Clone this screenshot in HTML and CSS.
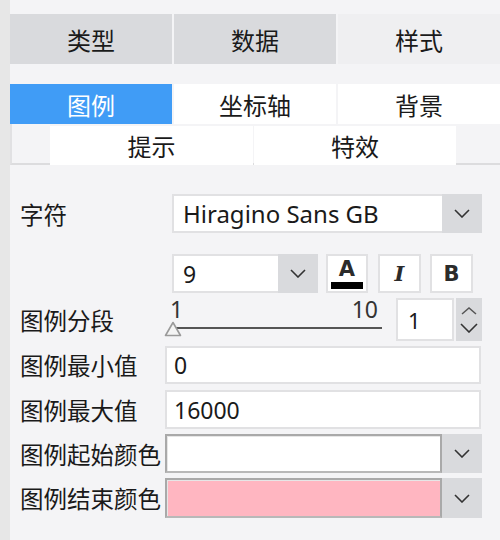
FILE: index.html
```html
<!DOCTYPE html>
<html lang="zh">
<head>
<meta charset="utf-8">
<link rel="stylesheet" href="styles.css">
</head>
<body>
<div class="app">
  <div class="strip"></div>
  <div class="panel">
    <div class="tabs main">
      <div class="tab gray">类型</div>
      <div class="tab gray">数据</div>
      <div class="tab light">样式</div>
    </div>
    <div class="tabs sub">
      <div class="tab blue">图例</div>
      <div class="tab white">坐标轴</div>
      <div class="tab white">背景</div>
    </div>
    <div class="subtabs">
      <div class="stab s1">提示</div>
      <div class="stab s2">特效</div>
    </div>
    <div class="form">
      <div class="row r-font">
        <div class="label">字符</div>
        <div class="combo font-combo">
          <div class="combo-text">Hiragino Sans GB</div>
          <div class="drop"><svg width="16" height="9" viewBox="0 0 16 9"><path d="M1 1 L8 8 L15 1" fill="none" stroke="#333" stroke-width="1.6"/></svg></div>
        </div>
      </div>
      <div class="row r-style">
        <div class="combo size-combo">
          <div class="combo-text num">9</div>
          <div class="drop"><svg width="16" height="9" viewBox="0 0 16 9"><path d="M1 1 L8 8 L15 1" fill="none" stroke="#333" stroke-width="1.6"/></svg></div>
        </div>
        <div class="sbtn btn-a"><span class="a-glyph">A</span><span class="a-bar"></span></div>
        <div class="sbtn btn-i">I</div>
        <div class="sbtn btn-b">B</div>
      </div>
      <div class="row r-slider">
        <div class="label">图例分段</div>
        <div class="slider">
          <div class="slider-labels"><span>1</span><span>10</span></div>
          <div class="track"></div>
          <svg class="thumb" width="18" height="16" viewBox="0 0 18 16"><path d="M9 1.5 L16.5 14.5 L1.5 14.5 Z" fill="#f4f4f4" stroke="#9a9a9a" stroke-width="1.6" stroke-linejoin="round"/></svg>
        </div>
        <div class="spin">
          <div class="spin-input num">1</div>
          <div class="spin-btns">
            <svg width="18" height="9" viewBox="0 0 18 9"><path d="M2 8 L9 2 L16 8" fill="none" stroke="#555" stroke-width="1.5"/></svg>
            <svg width="18" height="10" viewBox="0 0 18 10"><path d="M1 1 L9 9 L17 1" fill="none" stroke="#333" stroke-width="1.6"/></svg>
          </div>
        </div>
      </div>
      <div class="row r-min">
        <div class="label">图例最小值</div>
        <div class="input num">0</div>
      </div>
      <div class="row r-max">
        <div class="label">图例最大值</div>
        <div class="input num">16000</div>
      </div>
      <div class="row r-start">
        <div class="label">图例起始颜色</div>
        <div class="color-combo">
          <div class="swatch white-sw"></div>
          <div class="drop"><svg width="16" height="9" viewBox="0 0 16 9"><path d="M1 1 L8 8 L15 1" fill="none" stroke="#333" stroke-width="1.6"/></svg></div>
        </div>
      </div>
      <div class="row r-end">
        <div class="label">图例结束颜色</div>
        <div class="color-combo">
          <div class="swatch pink-sw"></div>
          <div class="drop"><svg width="16" height="9" viewBox="0 0 16 9"><path d="M1 1 L8 8 L15 1" fill="none" stroke="#333" stroke-width="1.6"/></svg></div>
        </div>
      </div>
    </div>
  </div>
</div>
</body>
</html>
```

FILE: styles.css
```css
* { box-sizing: border-box; }
html, body { margin: 0; padding: 0; }
body {
  font-family: "Noto Sans", "Noto Sans CJK SC", sans-serif;
  color: #1a1a1a;
  background: #f4f4f6;
}
.app { display: flex; width: 500px; height: 540px; overflow: hidden; }
.strip { width: 10px; flex: none; background: #e7e7e7; }
.panel { flex: 1; background: #f4f4f6; padding-top: 14px; }

.tabs { display: grid; grid-template-columns: 162px 162px 162px; column-gap: 2px; }
.tab {
  display: flex; align-items: center; justify-content: center;
  font-family: "Noto Sans CJK SC", sans-serif;
  font-size: 24px;
}
.main .tab { height: 50px; }
.sub { margin-top: 20px; }
.sub .tab { height: 40px; }
.gray { background: #d9dadd; }
.light { background: #efeff1; }
.blue { background: #409cf6; color: #fff; }
.white { background: #fff; }

.subtabs {
  display: flex; height: 41px;
  padding-left: 38px; padding-top: 2px;
  border-left: 2px solid #e1e1e3;
  border-bottom: 2px solid #dcdcde;
  gap: 1px;
}
.stab {
  background: #fff; height: 39px;
  display: flex; align-items: center; justify-content: center;
  font-family: "Noto Sans CJK SC", sans-serif; font-size: 24px;
}
.s1 { width: 203px; }
.s2 { width: 202px; }

.form { padding-left: 10px; padding-top: 29px; }
.row { display: flex; align-items: center; }
.label {
  width: 145px; flex: none;
  font-family: "Noto Sans CJK SC", sans-serif; font-size: 23.5px;
  white-space: nowrap;
}
.num { font-family: "Noto Sans", sans-serif; font-size: 23px; }

.combo { display: flex; height: 39px; }
.combo-text {
  flex: 1; background: #fff; border: 2px solid #e1e1e3; border-right: none;
  display: flex; align-items: center; padding-left: 9px;
  font-size: 24px; white-space: nowrap; overflow: hidden;
}
.drop {
  width: 40px; flex: none; background: #d9dadd;
  display: flex; align-items: center; justify-content: center;
}
.font-combo { margin-left: 7px; width: 310px; }
.r-font { height: 39px; }

.r-style { margin-top: 21px; height: 39px; padding-left: 152px; }
.size-combo { width: 146px; }
.size-combo .combo-text { font-size: 23px; }
.sbtn {
  height: 39px; background: #fff; border: 2px solid #e1e1e3;
  display: flex; align-items: center; justify-content: center;
  color: #2b2b2b;
}
.btn-a { width: 42px; margin-left: 8px; flex-direction: column; justify-content: flex-start; padding-top: 0; }
.a-glyph {
  font-family: "DejaVu Sans", sans-serif; font-weight: bold; font-size: 21px;
  line-height: 24px; height: 24px; margin-top: 1px;
}
.a-bar { width: 32px; height: 7px; background: #000; margin-top: 1px; }
.btn-i {
  width: 43px; margin-left: 10px;
  font-family: "DejaVu Serif", serif; font-style: italic; font-weight: bold; font-size: 21px;
}
.btn-b {
  width: 43px; margin-left: 9px;
  font-family: "DejaVu Sans", sans-serif; font-weight: 900; font-size: 21px;
}

.r-slider { margin-top: 5px; height: 43px; }
.slider { position: relative; width: 217px; height: 43px; }
.slider-labels {
  display: flex; justify-content: space-between;
  padding-left: 5px; padding-right: 4px;
  font-family: "Noto Sans", sans-serif; font-size: 23px; color: #333;
  line-height: 22px; height: 24px;
}
.track { margin-left: 5px; margin-top: 5px; width: 212px; height: 2px; background: #555; }
.thumb { position: absolute; left: -1px; top: 23px; }
.spin { display: flex; margin-left: 14px; height: 43px; }
.spin-input {
  width: 58px; background: #fff; border: 2px solid #e1e1e3;
  display: flex; align-items: center; padding-left: 10px; font-size: 22px;
}
.spin-btns {
  width: 26px; margin-left: 2px; background: #d9dadd;
  display: flex; flex-direction: column; align-items: center; justify-content: space-around;
  padding: 4px 0;
}

.input {
  width: 316px; background: #fff; border: 2px solid #e1e1e3;
  display: flex; align-items: center; padding-left: 7px;
}
.r-min { margin-top: 5px; height: 38px; }
.r-min .input { height: 38px; }
.r-max { margin-top: 6px; height: 39px; }
.r-max .input { height: 39px; }

.color-combo { display: flex; width: 317px; }
.swatch {
  width: 277px;
  border: 2px solid #a9a9a9;
  border-bottom-color: #b8b8b8;
  box-shadow: inset 1px 1px 0 #e6e6e6;
}
.white-sw { background: #fff; }
.pink-sw { background: #ffb6c1; }
.r-start { margin-top: 5px; height: 39px; }
.r-start .color-combo, .r-start .swatch { height: 39px; }
.r-end { margin-top: 5px; height: 40px; }
.r-end .color-combo, .r-end .swatch { height: 40px; }
```
